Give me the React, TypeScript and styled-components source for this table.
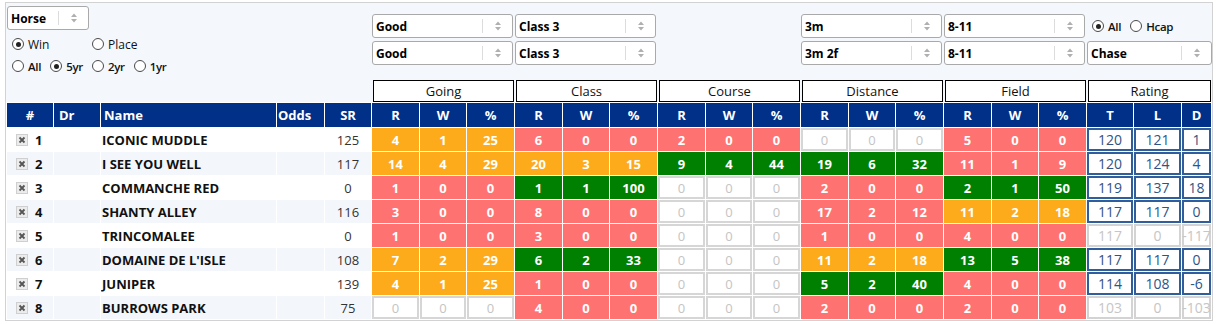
import React from "react";
import styled, { createGlobalStyle } from "styled-components";

type Tone = "green" | "orange" | "red" | "none";

interface Runner {
  no: number;
  name: string;
  sr: number;
  going: number[];
  klass: number[];
  course: number[];
  distance: number[];
  field: number[];
  rating: number[];
}

const runners: Runner[] = [
  { no: 1, name: "ICONIC MUDDLE", sr: 125, going: [4, 1, 25], klass: [6, 0, 0], course: [2, 0, 0], distance: [0, 0, 0], field: [5, 0, 0], rating: [120, 121, 1] },
  { no: 2, name: "I SEE YOU WELL", sr: 117, going: [14, 4, 29], klass: [20, 3, 15], course: [9, 4, 44], distance: [19, 6, 32], field: [11, 1, 9], rating: [120, 124, 4] },
  { no: 3, name: "COMMANCHE RED", sr: 0, going: [1, 0, 0], klass: [1, 1, 100], course: [0, 0, 0], distance: [2, 0, 0], field: [2, 1, 50], rating: [119, 137, 18] },
  { no: 4, name: "SHANTY ALLEY", sr: 116, going: [3, 0, 0], klass: [8, 0, 0], course: [0, 0, 0], distance: [17, 2, 12], field: [11, 2, 18], rating: [117, 117, 0] },
  { no: 5, name: "TRINCOMALEE", sr: 0, going: [1, 0, 0], klass: [3, 0, 0], course: [0, 0, 0], distance: [1, 0, 0], field: [4, 0, 0], rating: [117, 0, -117] },
  { no: 6, name: "DOMAINE DE L'ISLE", sr: 108, going: [7, 2, 29], klass: [6, 2, 33], course: [0, 0, 0], distance: [11, 2, 18], field: [13, 5, 38], rating: [117, 117, 0] },
  { no: 7, name: "JUNIPER", sr: 139, going: [4, 1, 25], klass: [1, 0, 0], course: [0, 0, 0], distance: [5, 2, 40], field: [4, 0, 0], rating: [114, 108, -6] },
  { no: 8, name: "BURROWS PARK", sr: 75, going: [0, 0, 0], klass: [4, 0, 0], course: [0, 0, 0], distance: [2, 0, 0], field: [2, 0, 0], rating: [103, 0, -103] },
];

const colWidths = [46, 46, 175, 47, 46, 47, 46, 47, 47, 46, 47, 47, 46, 47, 47, 46, 47, 47, 46, 47, 46, 47, 29];
const filterCols = "366px repeat(5, 143px) 125px";

const toneFor = (runs: number, pct: number): Tone => {
  if (runs === 0) return "none";
  if (pct >= 30) return "green";
  if (pct >= 15) return "orange";
  return "red";
};

const toneBg: Record<Tone, string> = {
  green: "#008000",
  orange: "#fdab1b",
  red: "#fe7371",
  none: "#ffffff",
};

const GlobalStyle = createGlobalStyle`
  html, body {
    margin: 0;
    padding: 0;
    background: #ffffff;
  }
  body {
    font-family: "Open Sans", "Liberation Sans", sans-serif;
    color: #111;
  }
`;

const Panel = styled.div`
  width: 1208px;
  margin: 2px 0 0 5px;
  box-sizing: border-box;
  border: 1px solid #d2d2d2;
  background: #f4f7fc;
`;

const FilterBar = styled.div`
  display: grid;
  grid-template-columns: ${filterCols};
  height: 77px;
`;

const RunnerFilters = styled.div`
  padding: 3px 0 0 1px;
  display: flex;
  flex-direction: column;
`;

const StackedFilters = styled.div<{ $last?: boolean }>`
  padding-top: 11px;
  display: flex;
  flex-direction: column;
  gap: 3px;
  margin-right: ${({ $last }) => ($last ? -2 : 0)}px;
`;

const SelectBox = styled.div<{ $width?: number }>`
  display: flex;
  align-items: center;
  box-sizing: border-box;
  height: 24px;
  width: ${({ $width }) => ($width ? `${$width}px` : "auto")};
  margin-right: 2px;
  padding-left: 3px;
  border: 1px solid #a9a9a9;
  border-radius: 3px;
  background: #fff;
  font-size: 12px;
  font-weight: 700;
  color: #000;
`;

const SelectValue = styled.span`
  flex: 1;
  white-space: nowrap;
`;

const SelectDivider = styled.span`
  width: 1px;
  height: 14px;
  background: #dcdcdc;
`;

const SelectArrows = styled.span`
  width: 29px;
  display: flex;
  justify-content: center;
  align-items: center;
`;

const RadioRow = styled.div<{ $top?: number; $height?: number }>`
  display: flex;
  align-items: center;
  margin-top: ${({ $top }) => $top ?? 0}px;
  height: ${({ $height }) => $height ?? 12}px;
  padding-left: 5px;
`;

const RadioLabel = styled.label<{ $bold?: boolean; $width?: number }>`
  display: inline-flex;
  align-items: center;
  gap: 4px;
  font-size: ${({ $bold }) => ($bold ? 11.5 : 12)}px;
  font-weight: ${({ $bold }) => ($bold ? 600 : 400)};
  letter-spacing: ${({ $bold }) => ($bold ? "-0.3px" : "0")};
  color: #111;
  margin-right: 9px;
  width: ${({ $width }) => ($width ? `${$width}px` : "auto")};
`;

const RadioDot = styled.span<{ $checked?: boolean }>`
  position: relative;
  width: 12px;
  height: 12px;
  box-sizing: border-box;
  border: 1px solid #4a4a4a;
  border-radius: 50%;
  background: #fff;
  flex: none;

  &::after {
    content: "";
    display: ${({ $checked }) => ($checked ? "block" : "none")};
    position: absolute;
    left: 2.5px;
    top: 2.5px;
    width: 5px;
    height: 5px;
    border-radius: 50%;
    background: #222;
  }
`;

const GroupBar = styled.div`
  display: grid;
  grid-template-columns: ${filterCols};
  height: 22px;
`;

const GroupBox = styled.div`
  margin: 0 1px;
  box-sizing: border-box;
  border: 1px solid #000;
  background: #fff;
  display: flex;
  align-items: center;
  justify-content: center;
  font-size: 13px;
  color: #111;
`;

const Table = styled.table`
  width: 1206px;
  table-layout: fixed;
  border-collapse: separate;
  border-spacing: 1px;
  background: #fff;
`;

const HeadCell = styled.th<{ $align?: string; $pad?: number }>`
  height: 24px;
  padding: 0 0 0 ${({ $pad }) => $pad ?? 0}px;
  background: #003087;
  color: #fff;
  font-size: 13px;
  font-weight: 700;
  text-align: ${({ $align }) => $align ?? "center"};
  white-space: nowrap;
`;

const Row = styled.tr<{ $alt: boolean }>`
  background: ${({ $alt }) => ($alt ? "#f3f7fc" : "#fff")};
`;

const Cell = styled.td`
  height: 23px;
  padding: 0;
  font-size: 13px;
  white-space: nowrap;
  overflow: hidden;
`;

const NumCell = styled(Cell)`
  padding-left: 9px;
  font-weight: 700;
`;

const NumInner = styled.span`
  display: inline-flex;
  align-items: center;
  gap: 7px;
`;

const RemoveBox = styled.span`
  display: inline-flex;
  align-items: center;
  justify-content: center;
  width: 12px;
  height: 12px;
  box-sizing: border-box;
  border: 1px solid #cfcfcf;
  background: #ececec;
`;

const NameCell = styled(Cell)`
  padding-left: 1px;
  font-weight: 700;
  color: #111;
`;

const SrCell = styled(Cell)`
  text-align: center;
  color: #333;
`;

const StatCell = styled(Cell)<{ $tone: Tone }>`
  text-align: center;
  background: ${({ $tone }) => toneBg[$tone]};
  color: ${({ $tone }) => ($tone === "none" ? "#c4c4c4" : "#fff")};
  font-weight: ${({ $tone }) => ($tone === "none" ? 400 : 700)};
  box-shadow: ${({ $tone }) => ($tone === "none" ? "inset 0 0 0 2px #d6d6d6" : "none")};
`;

const RatingCell = styled(Cell)<{ $muted: boolean }>`
  text-align: center;
  font-size: 14px;
  background: #fff;
  color: ${({ $muted }) => ($muted ? "#c6c6c6" : "#2e5486")};
  box-shadow: inset 0 0 0 2px ${({ $muted }) => ($muted ? "#d3d3d3" : "#2f5e9b")};
  text-overflow: clip;
`;

function Arrows() {
  return (
    <svg width="6" height="10" viewBox="0 0 6 10">
      <path d="M0 4 L3 0.5 L6 4 Z M0 6 L3 9.5 L6 6 Z" fill="#b0b0b0" />
    </svg>
  );
}

function Select({ value, width }: { value: string; width?: number }) {
  return (
    <SelectBox $width={width}>
      <SelectValue>{value}</SelectValue>
      <SelectDivider />
      <SelectArrows>
        <Arrows />
      </SelectArrows>
    </SelectBox>
  );
}

function Radio({ label, checked, bold, width }: { label: string; checked?: boolean; bold?: boolean; width?: number }) {
  return (
    <RadioLabel $bold={bold} $width={width}>
      <RadioDot $checked={checked} />
      {label}
    </RadioLabel>
  );
}

function Stats({ values }: { values: number[] }) {
  const tone = toneFor(values[0], values[2]);
  return (
    <>
      {values.map((v, i) => (
        <StatCell key={i} $tone={tone}>
          {v}
        </StatCell>
      ))}
    </>
  );
}

const groups = ["Going", "Class", "Course", "Distance", "Field"];

export default function App() {
  return (
    <>
      <GlobalStyle />
      <Panel>
        <FilterBar>
          <RunnerFilters>
            <Select value="Horse" width={82} />
            <RadioRow $top={8}>
              <Radio label="Win" checked width={71} />
              <Radio label="Place" />
            </RadioRow>
            <RadioRow $top={10}>
              <Radio label="All" bold />
              <Radio label="5yr" checked bold />
              <Radio label="2yr" bold />
              <Radio label="1yr" bold />
            </RadioRow>
          </RunnerFilters>
          <StackedFilters>
            <Select value="Good" />
            <Select value="Good" />
          </StackedFilters>
          <StackedFilters>
            <Select value="Class 3" />
            <Select value="Class 3" />
          </StackedFilters>
          <div />
          <StackedFilters>
            <Select value="3m" />
            <Select value="3m 2f" />
          </StackedFilters>
          <StackedFilters>
            <Select value="8-11" />
            <Select value="8-11" />
          </StackedFilters>
          <StackedFilters $last>
            <RadioRow $height={24}>
              <Radio label="All" checked bold />
              <Radio label="Hcap" bold />
            </RadioRow>
            <Select value="Chase" />
          </StackedFilters>
        </FilterBar>

        <GroupBar>
          <div />
          {groups.map((g) => (
            <GroupBox key={g}>{g}</GroupBox>
          ))}
          <GroupBox>Rating</GroupBox>
        </GroupBar>

        <Table>
          <colgroup>
            {colWidths.map((w, i) => (
              <col key={i} width={w} />
            ))}
          </colgroup>
          <thead>
            <tr>
              <HeadCell>#</HeadCell>
              <HeadCell $align="left" $pad={5}>Dr</HeadCell>
              <HeadCell $align="left" $pad={3}>Name</HeadCell>
              <HeadCell $align="left" $pad={1}>Odds</HeadCell>
              <HeadCell>SR</HeadCell>
              {groups.map((g) => (
                <React.Fragment key={g}>
                  <HeadCell>R</HeadCell>
                  <HeadCell>W</HeadCell>
                  <HeadCell>%</HeadCell>
                </React.Fragment>
              ))}
              <HeadCell>T</HeadCell>
              <HeadCell>L</HeadCell>
              <HeadCell>D</HeadCell>
            </tr>
          </thead>
          <tbody>
            {runners.map((r, idx) => {
              const muted = r.rating[1] === 0;
              return (
                <Row key={r.no} $alt={idx % 2 === 1}>
                  <NumCell>
                    <NumInner>
                      <RemoveBox>
                        <svg width="8" height="8" viewBox="0 0 8 8">
                          <path d="M1.5 1.5 L6.5 6.5 M6.5 1.5 L1.5 6.5" stroke="#555" strokeWidth="1.8" />
                        </svg>
                      </RemoveBox>
                      {r.no}
                    </NumInner>
                  </NumCell>
                  <Cell />
                  <NameCell>{r.name}</NameCell>
                  <Cell />
                  <SrCell>{r.sr}</SrCell>
                  <Stats values={r.going} />
                  <Stats values={r.klass} />
                  <Stats values={r.course} />
                  <Stats values={r.distance} />
                  <Stats values={r.field} />
                  {r.rating.map((v, i) => (
                    <RatingCell key={i} $muted={muted}>
                      {v}
                    </RatingCell>
                  ))}
                </Row>
              );
            })}
          </tbody>
        </Table>
      </Panel>
    </>
  );
}
